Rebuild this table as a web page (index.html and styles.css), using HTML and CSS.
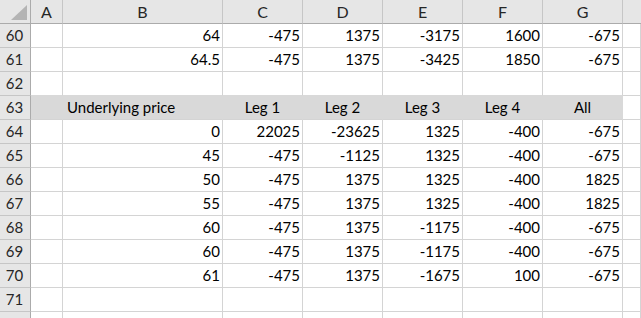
FILE: index.html
```html
<!DOCTYPE html>
<html>
<head>
<meta charset="utf-8">
<link rel="stylesheet" href="styles.css">
</head>
<body>
<div class="sheet">
  <div class="corner"><span class="tri"></span></div>
  <div class="ch">A</div><div class="ch">B</div><div class="ch">C</div><div class="ch">D</div><div class="ch">E</div><div class="ch">F</div><div class="ch">G</div><div class="ch last"></div>

  <div class="rh">60</div><div class="c"></div><div class="c n">64</div><div class="c n">-475</div><div class="c n">1375</div><div class="c n">-3175</div><div class="c n">1600</div><div class="c n">-675</div><div class="c"></div>
  <div class="rh">61</div><div class="c"></div><div class="c n">64.5</div><div class="c n">-475</div><div class="c n">1375</div><div class="c n">-3425</div><div class="c n">1850</div><div class="c n">-675</div><div class="c"></div>
  <div class="rh">62</div><div class="c pre"></div><div class="c pre"></div><div class="c pre"></div><div class="c pre"></div><div class="c pre"></div><div class="c pre"></div><div class="c pre"></div><div class="c"></div>
  <div class="rh">63</div><div class="c g"></div><div class="c g left">Underlying price</div><div class="c g ctr">Leg 1</div><div class="c g ctr">Leg 2</div><div class="c g ctr">Leg 3</div><div class="c g ctr">Leg 4</div><div class="c g ctr">All</div><div class="c"></div>
  <div class="rh">64</div><div class="c"></div><div class="c n">0</div><div class="c n">22025</div><div class="c n">-23625</div><div class="c n">1325</div><div class="c n">-400</div><div class="c n">-675</div><div class="c"></div>
  <div class="rh">65</div><div class="c"></div><div class="c n">45</div><div class="c n">-475</div><div class="c n">-1125</div><div class="c n">1325</div><div class="c n">-400</div><div class="c n">-675</div><div class="c"></div>
  <div class="rh">66</div><div class="c"></div><div class="c n">50</div><div class="c n">-475</div><div class="c n">1375</div><div class="c n">1325</div><div class="c n">-400</div><div class="c n">1825</div><div class="c"></div>
  <div class="rh">67</div><div class="c"></div><div class="c n">55</div><div class="c n">-475</div><div class="c n">1375</div><div class="c n">1325</div><div class="c n">-400</div><div class="c n">1825</div><div class="c"></div>
  <div class="rh">68</div><div class="c"></div><div class="c n">60</div><div class="c n">-475</div><div class="c n">1375</div><div class="c n">-1175</div><div class="c n">-400</div><div class="c n">-675</div><div class="c"></div>
  <div class="rh">69</div><div class="c"></div><div class="c n">60</div><div class="c n">-475</div><div class="c n">1375</div><div class="c n">-1175</div><div class="c n">-400</div><div class="c n">-675</div><div class="c"></div>
  <div class="rh">70</div><div class="c"></div><div class="c n">61</div><div class="c n">-475</div><div class="c n">1375</div><div class="c n">-1675</div><div class="c n">100</div><div class="c n">-675</div><div class="c"></div>
  <div class="rh">71</div><div class="c"></div><div class="c"></div><div class="c"></div><div class="c"></div><div class="c"></div><div class="c"></div><div class="c"></div><div class="c"></div>
  <div class="rh"></div><div class="c"></div><div class="c"></div><div class="c"></div><div class="c"></div><div class="c"></div><div class="c"></div><div class="c"></div><div class="c"></div>
</div>
</body>
</html>
```
FILE: styles.css
```css
html, body {
  margin: 0;
  padding: 0;
  background: #ffffff;
  overflow: hidden;
}
.sheet {
  display: grid;
  grid-template-columns: 31px 32px 160px repeat(5, 80px) 1fr;
  grid-auto-rows: 24px;
  width: 641px;
  height: 318px;
  overflow: hidden;
  font-family: Lato, "Liberation Sans", sans-serif;
  font-size: 15px;
  color: #000;
}
.corner {
  position: relative;
  background: #e6e6e6;
  border-right: 1px solid #ababab;
  border-bottom: 1px solid #ababab;
  box-sizing: border-box;
}
.tri {
  position: absolute;
  right: 3px;
  bottom: 3px;
  width: 0;
  height: 0;
  border-style: solid;
  border-width: 0 0 15px 16px;
  border-color: transparent transparent #b4b4b4 transparent;
}
.ch {
  background: #e6e6e6;
  border-right: 1px solid #c6c6c6;
  border-bottom: 1px solid #ababab;
  box-sizing: border-box;
  text-align: center;
  line-height: 23px;
  color: #262626;
  font-size: 16px;
}
.ch.last {
  border-right: none;
}
.rh {
  background: #e6e6e6;
  border-right: 1px solid #ababab;
  border-bottom: 1px solid #c6c6c6;
  box-sizing: border-box;
  text-align: center;
  line-height: 23px;
  color: #262626;
  padding-right: 1px;
}
.c {
  border-right: 1px solid #d4d4d4;
  border-bottom: 1px solid #d4d4d4;
  box-sizing: border-box;
  line-height: 23px;
  white-space: nowrap;
  overflow: hidden;
}
.n {
  text-align: right;
  padding-right: 2px;
}
.pre {
  border-bottom-color: #d9d9d9;
}
.g {
  background: #d9d9d9;
  border-right-color: #d9d9d9;
}
.left {
  padding-left: 4px;
}
.ctr {
  text-align: center;
}
```
